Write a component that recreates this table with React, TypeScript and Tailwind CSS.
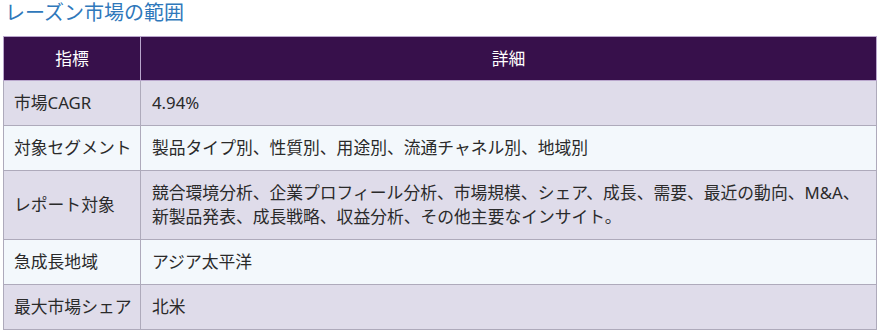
const rows: [string, string[]][] = [
  ["市場CAGR", ["4.94%"]],
  ["対象セグメント", ["製品タイプ別、性質別、用途別、流通チャネル別、地域別"]],
  [
    "レポート対象",
    [
      "競合環境分析、企業プロフィール分析、市場規模、シェア、成長、需要、最近の動向、M&A、",
      "新製品発表、成長戦略、収益分析、その他主要なインサイト。",
    ],
  ],
  ["急成長地域", ["アジア太平洋"]],
  ["最大市場シェア", ["北米"]],
];

export default function App() {
  return (
    <div
      className="w-[880px] h-[333px] bg-white overflow-hidden"
      style={{ fontFamily: '"Noto Sans", "Noto Sans CJK JP", sans-serif' }}
    >
      <h2 className="pl-[5px] h-[36px] text-[20px] leading-[26px] text-[#2f78bb]">
        レーズン市場の範囲
      </h2>

      <table className="ml-[3px] w-[874px] border-collapse text-[16.8px] leading-[24px] text-[#2a2a2a]">
        <thead>
          <tr className="bg-[#37104b] text-white">
            <th className="w-[137px] h-[44px] border border-[#b9a6cc] font-normal text-center">
              指標
            </th>
            <th className="h-[44px] border border-[#b9a6cc] font-normal text-center">
              詳細
            </th>
          </tr>
        </thead>
        <tbody>
          {rows.map(([label, lines], i) => (
            <tr
              key={label}
              className={i % 2 === 0 ? "bg-[#dfdcea]" : "bg-[#f3f8fc]"}
            >
              <td className="border border-[#aeaabb] pl-[10px] py-[10px] align-middle whitespace-nowrap">
                {label}
              </td>
              <td className="border border-[#aeaabb] pl-[11px] py-[10px] align-middle">
                {lines.map((l) => (
                  <div key={l} className="whitespace-nowrap">{l}</div>
                ))}
              </td>
            </tr>
          ))}
        </tbody>
      </table>
    </div>
  );
}
